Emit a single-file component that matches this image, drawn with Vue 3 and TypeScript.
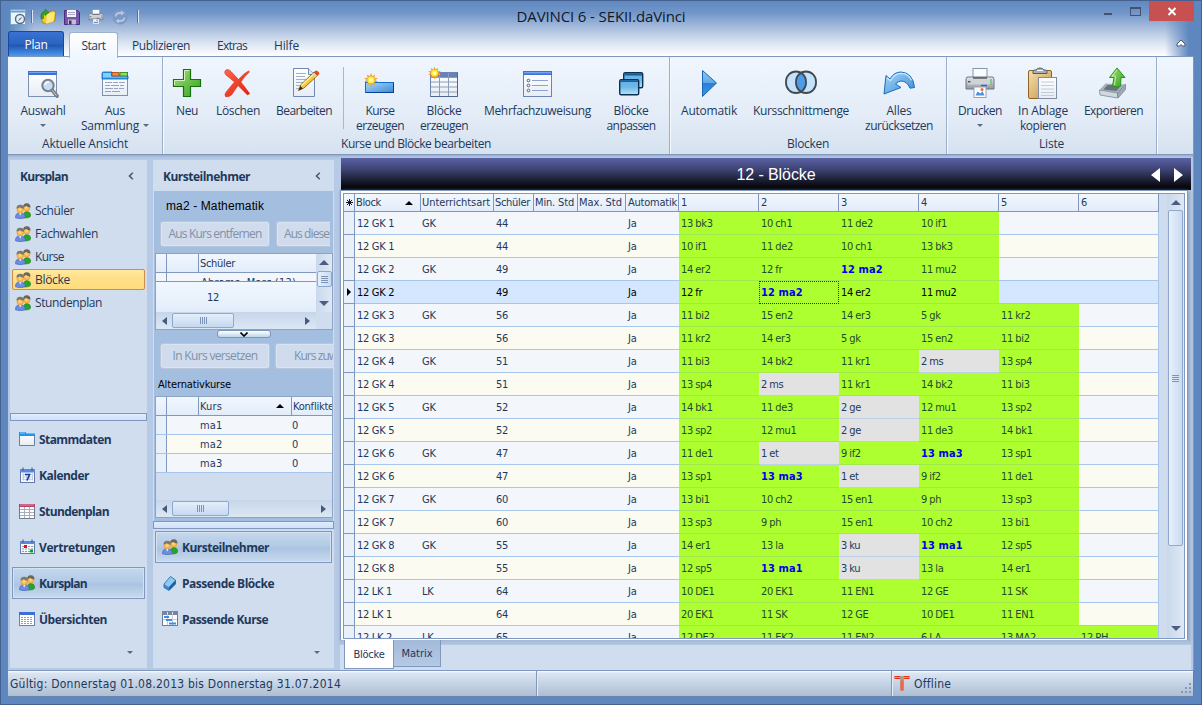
<script setup lang="ts">
import type { Directive } from 'vue'

/* Spreads or tightens a label so that it takes exactly the given width. */
const vFit: Directive<HTMLElement, number | undefined> = {
  mounted(el, binding) {
    const count = (el.textContent ?? '').length
    if (!binding.value || !count) return
    el.style.letterSpacing = '0px'
    const natural = el.getBoundingClientRect().width
    el.style.letterSpacing = `${(binding.value - natural) / count}px`
  },
}

interface Line { text: string; width: number }
interface Tool { icon: string; w: string; lines: Line[]; drop?: 'below' | 'inline' }
interface Group { title: Line; w: string; parts: Tool[][] }

const l = (text: string, width: number): Line => ({ text, width })

const tabs = [
  { ...l('Publizieren', 58), cls: 't-pub' },
  { ...l('Extras', 30), cls: 't-ext' },
  { ...l('Hilfe', 25), cls: 't-hil' },
]

const groups: Group[] = [
  {
    title: l('Aktuelle Ansicht', 86), w: 'g155',
    parts: [[
      { icon: 'select', w: 'w70', lines: [l('Auswahl', 45)], drop: 'below' },
      { icon: 'collection', w: 'w74', lines: [l('Aus', 20), l('Sammlung', 58)], drop: 'inline' },
    ]],
  },
  {
    title: l('Kurse und Blöcke bearbeiten', 150), w: 'g507',
    parts: [
      [
        { icon: 'plus', w: 'w48', lines: [l('Neu', 22)] },
        { icon: 'delete', w: 'w54', lines: [l('Löschen', 44)] },
        { icon: 'edit', w: 'w78', lines: [l('Bearbeiten', 56)] },
      ],
      [
        { icon: 'course', w: 'w72', lines: [l('Kurse', 29), l('erzeugen', 48)] },
        { icon: 'blocks', w: 'w56', lines: [l('Blöcke', 35), l('erzeugen', 48)] },
        { icon: 'multi', w: 'w131', lines: [l('Mehrfachzuweisung', 107)] },
        { icon: 'adapt', w: 'w56', lines: [l('Blöcke', 35), l('anpassen', 49)] },
      ],
    ],
  },
  {
    title: l('Blocken', 42), w: 'g277',
    parts: [[
      { icon: 'play', w: 'w78', lines: [l('Automatik', 56)] },
      { icon: 'venn', w: 'w106', lines: [l('Kursschnittmenge', 96)] },
      { icon: 'undo', w: 'w90', lines: [l('Alles', 25), l('zurücksetzen', 68)] },
    ]],
  },
  {
    title: l('Liste', 25), w: 'g210',
    parts: [[
      { icon: 'printer', w: 'w66', lines: [l('Drucken', 44)], drop: 'below' },
      { icon: 'clipboard', w: 'w60', lines: [l('In Ablage', 50), l('kopieren', 46)] },
      { icon: 'export', w: 'w81', lines: [l('Exportieren', 59)] },
    ]],
  },
]

const views = [l('Schüler', 39), l('Fachwahlen', 63), l('Kurse', 29), l('Blöcke', 35), l('Stundenplan', 67)]

const modules = [
  { ...l('Stammdaten', 72), icon: 'folder' },
  { ...l('Kalender', 50), icon: 'calendar' },
  { ...l('Stundenplan', 70), icon: 'timetable' },
  { ...l('Vertretungen', 76), icon: 'substitute' },
  { ...l('Kursplan', 48), icon: 'people' },
  { ...l('Übersichten', 68), icon: 'overview' },
]

const panels = [
  { ...l('Kursteilnehmer', 87), icon: 'people' },
  { ...l('Passende Blöcke', 92), icon: 'cube' },
  { ...l('Passende Kurse', 86), icon: 'gantt' },
]

const alternatives = ['ma1', 'ma2', 'ma3']

const columns = [
  l('Block', 25), l('Unterrichtsart', 68), l('Schüler', 35), l('Min. Std', 39), l('Max. Std', 43), l('Automatik', 49),
]

interface Row { block: string; kind: string; pupils: number; cells: string[] }
const row = (block: string, kind: string, pupils: number, cells: string): Row =>
  ({ block, kind, pupils, cells: cells.split(',') })

const rows: Row[] = [
  row('12 GK 1', 'GK', 44, '13 bk3,10 ch1,11 de2,10 if1'),
  row('12 GK 1', '', 44, '10 if1,11 de2,10 ch1,13 bk3'),
  row('12 GK 2', 'GK', 49, '14 er2,12 fr,12 ma2,11 mu2'),
  row('12 GK 2', '', 49, '12 fr,12 ma2,14 er2,11 mu2'),
  row('12 GK 3', 'GK', 56, '11 bi2,15 en2,14 er3,5 gk,11 kr2'),
  row('12 GK 3', '', 56, '11 kr2,14 er3,5 gk,15 en2,11 bi2'),
  row('12 GK 4', 'GK', 51, '11 bi3,14 bk2,11 kr1,2 ms,13 sp4'),
  row('12 GK 4', '', 51, '13 sp4,2 ms,11 kr1,14 bk2,11 bi3'),
  row('12 GK 5', 'GK', 52, '14 bk1,11 de3,2 ge,12 mu1,13 sp2'),
  row('12 GK 5', '', 52, '13 sp2,12 mu1,2 ge,11 de3,14 bk1'),
  row('12 GK 6', 'GK', 47, '11 de1,1 et,9 if2,13 ma3,13 sp1'),
  row('12 GK 6', '', 47, '13 sp1,13 ma3,1 et,9 if2,11 de1'),
  row('12 GK 7', 'GK', 60, '13 bi1,10 ch2,15 en1,9 ph,13 sp3'),
  row('12 GK 7', '', 60, '13 sp3,9 ph,15 en1,10 ch2,13 bi1'),
  row('12 GK 8', 'GK', 55, '14 er1,13 la,3 ku,13 ma1,12 sp5'),
  row('12 GK 8', '', 55, '12 sp5,13 ma1,3 ku,13 la,14 er1'),
  row('12 LK 1', 'LK', 64, '10 DE1,20 EK1,11 EN1,12 GE,11 SK'),
  row('12 LK 1', '', 64, '20 EK1,11 SK,12 GE,10 DE1,11 EN1'),
  row('12 LK 2', 'LK', 65, '12 DE2,11 EK2,11 EN2,6 LA,13 MA2,12 PH'),
]

const current = 3
const weak = ['2 ms', '2 ge', '1 et', '3 ku']

function cellClass(r: Row, ri: number, ci: number) {
  const text = r.cells[ci]
  return {
    filled: !!text && !weak.includes(text),
    weak: !!text && weak.includes(text),
    maths: !!text && / ma\d/.test(text),
    focus: ri === current && ci === 1,
  }
}
</script>

<template>
  <svg class="defs" width="0" height="0" aria-hidden="true">
    <defs>
      <linearGradient id="gBlue" x1="0" y1="0" x2="1" y2="1"><stop offset="0" stop-color="#a8d8f8" /><stop offset="1" stop-color="#3b8ad6" /></linearGradient>
      <linearGradient id="gPane" x1="0" y1="0" x2="0" y2="1"><stop offset="0" stop-color="#5cb0ea" /><stop offset=".5" stop-color="#6db9e8" /><stop offset="1" stop-color="#b8e6fa" /></linearGradient>
      <linearGradient id="gGreen" x1="0" y1="0" x2="1" y2="1"><stop offset="0" stop-color="#a4e07e" /><stop offset="1" stop-color="#36a01e" /></linearGradient>
      <linearGradient id="gPaper" x1="0" y1="0" x2="0" y2="1"><stop offset="0" stop-color="#fff" /><stop offset="1" stop-color="#e6edf6" /></linearGradient>
      <linearGradient id="gTan" x1="0" y1="0" x2="1" y2="1"><stop offset="0" stop-color="#f5dfb0" /><stop offset="1" stop-color="#c89340" /></linearGradient>
      <linearGradient id="gGray" x1="0" y1="0" x2="0" y2="1"><stop offset="0" stop-color="#e8ebee" /><stop offset="1" stop-color="#8f979f" /></linearGradient>
      <linearGradient id="gRed" x1="0" y1="0" x2="1" y2="1"><stop offset="0" stop-color="#f86a50" /><stop offset="1" stop-color="#e01c08" /></linearGradient>
      <linearGradient id="gPlay" x1="0" y1="0" x2="0" y2="1"><stop offset="0" stop-color="#8cc8f4" /><stop offset=".49" stop-color="#5ca8e8" /><stop offset=".5" stop-color="#2b80d4" /><stop offset="1" stop-color="#3f97e6" /></linearGradient>
      <radialGradient id="gSkin"><stop offset="0" stop-color="#ffe08a" /><stop offset="1" stop-color="#f0a030" /></radialGradient>
    </defs>

    <symbol id="star" viewBox="0 0 14 14">
      <path d="M7 0l1.200 3.300L11 1.600l-.6 3.200L14 5.200 11.200 7 14 8.800l-3.600.4.6 3.200-2.800-1.700L7 14l-1.200-3.300L3 12.400l.6-3.200L0 8.800 2.800 7 0 5.200l3.600-.4L3 1.600l2.800 1.700z" fill="#f0a030" />
      <circle cx="7" cy="7" r="3.600" fill="#ffee30" /><circle cx="7" cy="7" r="2" fill="#fffbc0" />
    </symbol>

    <symbol id="select" viewBox="0 0 32 32">
      <rect x="1.500" y="4.500" width="28" height="25" fill="url(#gPaper)" stroke="#7c90b0" />
      <rect x="1" y="4" width="29" height="4" fill="#3f6fd8" /><rect x="2" y="5" width="27" height="1" fill="#79a2f0" />
      <path d="M25 23l5 6" stroke="#777c84" stroke-width="3.600" stroke-linecap="round" /><path d="M25 23l4.500 5.500" stroke="#d5d8dc" stroke-width="1" />
      <circle cx="21" cy="18.500" r="5.700" fill="#c4dcf6" stroke="#7c8289" stroke-width="2" /><path d="M18 18a3.500 3.500 0 0 1 4-3" stroke="#fff" stroke-width="1.400" fill="none" />
    </symbol>

    <symbol id="collection" viewBox="0 0 32 32">
      <rect x="3.500" y="7.500" width="25" height="21" fill="url(#gPaper)" stroke="#7c90b0" />
      <path d="M3 6.500q0-1.500 1.500-1.500H13v4h16v3H3z" fill="#2c9cf0" stroke="#1560b0" stroke-width=".8" /><path d="M4 6h8v3.500h16v1H4z" fill="#7fd0ff" />
      <rect x="13" y="5.400" width="7" height="3.600" fill="#f48848" stroke="#a64010" stroke-width=".8" /><rect x="21" y="5.400" width="7.600" height="3.600" fill="#94dc50" stroke="#2c7c14" stroke-width=".8" />
      <path d="M6 15.500h7m1 0h5m1 0h6M6 18.500h5m1 0h8m1 0h4M6 21.500h8m1 0h4m1 0h5M6 24.500h6m1 0h8" stroke="#96a4c4" />
    </symbol>

    <symbol id="plus" viewBox="0 0 32 32">
      <path d="M12.500 2.500h7v10h10v7h-10v10h-7v-10h-10v-7h10z" fill="url(#gGreen)" stroke="#14720c" stroke-width="1.200" />
      <path d="M13.500 13.500v-10h5M3.500 18v-4.500h10" fill="none" stroke="#d2f4bc" stroke-width="1" />
    </symbol>

    <symbol id="delete" viewBox="0 0 32 32">
      <path d="M3 4q2.500-3 6 .5l7.500 8q5-6 10-8.500l1 .8q-5 4.500-8.600 10.200l8.800 11.500-2.200 1.500L16 18.500q-3.500 5-6.500 9.500Q7 30.500 3.500 29.500 2 27.500 4.500 24.500L12.500 15 4 8Q2 6 3 4z" fill="url(#gRed)" stroke="#e8280f" stroke-width=".6" />
    </symbol>

    <symbol id="edit" viewBox="0 0 32 32">
      <path d="M5.500 1.500h15l6 6v22h-21z" fill="url(#gPaper)" stroke="#7288b0" /><path d="M20.500 1.500v6h6" fill="#dce8f8" stroke="#7288b0" />
      <path d="M8 6.500h10M8 9.500h9M8 12.500h13M8 15.500h11M8 18.500h9M8 21.500h4" stroke="#9eb0d0" />
      <path d="M10.500 23.500l2.500-6L26 5l3.500 3.500L16 21z" fill="#f6c838" stroke="#96640c" stroke-width=".9" /><path d="M13.500 18.500L26.500 6.500" stroke="#fff0a0" stroke-width="1.200" />
      <path d="M10.500 23.500l1.800-4.500 2.600 2.600z" fill="#33281c" /><path d="M26 5l1.800-1.500q3.500.5 3.500 3.500l-1.800 1.500z" fill="#e84818" /><path d="M24.500 6.500l3.500 3.500" stroke="#c8d4e0" stroke-width="1.400" />
    </symbol>

    <symbol id="course" viewBox="0 0 32 32">
      <rect x="1.500" y="15.500" width="28" height="10" fill="url(#gBlue)" stroke="#0f6cd0" stroke-width="1" />
      <path d="M29.500 16v9.500H2" fill="none" stroke="#0a3c98" /><use href="#star" x="0" y="6" width="14" height="14" />
    </symbol>

    <symbol id="blocks" viewBox="0 0 32 32">
      <rect x="2.500" y="5.500" width="27" height="24" fill="url(#gPaper)" stroke="#6e84b0" /><rect x="3" y="6" width="26" height="4" fill="#6482c0" />
      <path d="M3 10.500h26M3 15h26M3 20h26M3 25h26M11.500 6v23M20.500 6v23" stroke="#8c9cb8" /><path d="M2.500 29.500h27v-24" fill="none" stroke="#4f6490" />
      <use href="#star" x="0" y="-1" width="13" height="14" />
    </symbol>

    <symbol id="multi" viewBox="0 0 32 32">
      <rect x="1.500" y="4.500" width="28" height="25" fill="url(#gPaper)" stroke="#6e84b0" /><rect x="1" y="4" width="29" height="4" fill="#3f6fd8" /><rect x="2" y="5" width="27" height="1.400" fill="#79a2f0" />
      <g fill="#fff" stroke="#4a5a74"><circle cx="6.500" cy="13.500" r="1.300" /><circle cx="6.500" cy="18.500" r="1.300" /><circle cx="6.500" cy="23.500" r="1.300" /></g>
      <path d="M10 13.500h16M10 18.500h16M10 23.500h16" stroke="#8ca4cc" />
    </symbol>

    <symbol id="adapt" viewBox="0 0 32 32">
      <rect x="8.700" y="5.700" width="19" height="15" rx="1.500" fill="url(#gPane)" stroke="#0c3050" stroke-width="1.400" /><path d="M9.500 7.500h17.500" stroke="#1c5c90" stroke-width="2" />
      <rect x="4.700" y="12.700" width="19" height="15" rx="1.500" fill="url(#gPane)" stroke="#0c3050" stroke-width="1.400" /><path d="M5.500 14.200h17.500" stroke="#1c6298" stroke-width="1.600" />
    </symbol>

    <symbol id="play" viewBox="0 0 32 32"><path d="M9.500 3.500L23.500 16l-14 13.500z" fill="url(#gPlay)" stroke="#1c64b4" stroke-width="1" /></symbol>

    <symbol id="venn" viewBox="0 0 32 32">
      <rect x="1" y="4.500" width="20" height="21.500" rx="10" fill="#c4e2fa" /><rect x="11" y="4.500" width="20" height="21.500" rx="10" fill="#c4e2fa" />
      <path d="M16 6.200q5 3 5 9t-5 9q-5-3-5-9t5-9z" fill="#4c9ce8" />
      <rect x="1" y="4.500" width="20" height="21.500" rx="10" fill="none" stroke="#404850" stroke-width="1.800" /><rect x="11" y="4.500" width="20" height="21.500" rx="10" fill="none" stroke="#404850" stroke-width="1.800" />
    </symbol>

    <symbol id="undo" viewBox="0 0 32 32">
      <path d="M1 27L3 8.500l4 3.500Q11 5 18 5q12 .8 13.500 15.500l-4.500.7q-3-7.200-9-7.200-3 .3-5.500 3l5.500 3.500z" fill="url(#gBlue)" stroke="#1a6cc0" stroke-width="1" />
      <path d="M4 11l3.300 2.700Q11.500 6.500 18 6.300q7.500.4 10.500 7" fill="none" stroke="#c8eaff" stroke-width="1.200" />
    </symbol>

    <symbol id="printer" viewBox="0 0 32 32">
      <rect x="9" y="1.500" width="14" height="10" fill="#f8fbff" stroke="#8894a8" />
      <path d="M3 10h26l1 2v10H2V12z" fill="url(#gGray)" stroke="#70767e" /><path d="M4 12.500h24v5H4z" fill="#cfd3d8" /><path d="M9 11h14" stroke="#4a5058" stroke-width="1.400" />
      <rect x="4" y="14" width="2.500" height="1.500" fill="#555" /><path d="M27 12.500v1m0 1v1m0 1v1" stroke="#20b020" stroke-width="1.600" /><path d="M17 18.500h6" stroke="#3060d0" stroke-width="1.500" />
      <rect x="10" y="20" width="12" height="10.500" fill="#fff" stroke="#90a4c0" /><path d="M11.500 28.500l2-4 3 2 2-2.500 2 4.500z" fill="#4a90e0" /><circle cx="18" cy="22.500" r="1.600" fill="#f07040" />
    </symbol>

    <symbol id="clipboard" viewBox="0 0 32 32">
      <rect x="1.500" y="3.500" width="23" height="28" rx="1.500" fill="url(#gTan)" stroke="#8c6426" />
      <path d="M6 6.500V4.500q0-1.500 1.500-1.500H9q1.500-2 4-2t4 2h1.500q1.500 0 1.500 1.500v2z" fill="#a8aeb6" stroke="#555c66" /><path d="M10 3.500h6" stroke="#fff" />
      <rect x="11.500" y="10.500" width="18" height="21" fill="url(#gPaper)" stroke="#7e8ca4" /><path d="M14 15h13M14 18.500h13M14 22h13M14 25.500h13M14 28.500h13" stroke="#c4ccd8" />
    </symbol>

    <symbol id="export" viewBox="0 0 32 32">
      <path d="M1.500 23l6-6.500 19.500 1-6.500 8.500z" fill="#a4b0bc" /><path d="M5.500 22.500l4-4.500h14l-5 6z" fill="#66727e" />
      <path d="M1.500 23l18 3v5L2 28z" fill="#d0d8e0" stroke="#7c8894" stroke-width=".8" /><path d="M19.500 26l8-9v5.500l-7.500 8.500z" fill="#9ca8b4" stroke="#7c8894" stroke-width=".8" />
      <path d="M19 1l8 9.500h-4L22.500 19q-4 2-8 0l1.500-8.500h-4.500z" fill="url(#gGreen)" stroke="#259814" /><path d="M19 3l-5 6h3.500l-1 9" fill="none" stroke="#c4f6a0" />
    </symbol>

    <symbol id="people" viewBox="0 0 16 16">
      <path d="M8.500 15q-1-5 2.500-6.500 4.500 0 4.800 4-.5 2.800-7.300 2.500z" fill="#28a428" stroke="#157018" stroke-width=".5" />
      <circle cx="11.700" cy="4.800" r="3.500" fill="url(#gSkin)" /><path d="M8.200 4.200Q8 .4 11.800.3q3.900.2 3.700 4.300Q12.500 4.500 11 2.800 10 4.200 8.200 4.200z" fill="#6a6660" />
      <path d="M.3 14.800Q.3 10 4.800 9.500q5.200.3 5.700 5-4.800 2.600-10.200.3z" fill="#6c8ce0" stroke="#3c5cb4" stroke-width=".5" /><path d="M4 9.700l1.200 3 1.400-3z" fill="#dceaff" />
      <circle cx="5.200" cy="6.500" r="3.600" fill="url(#gSkin)" /><path d="M1.500 5.600Q1.200 2 5.200 1.800 9.300 2 9 5.800 6 5.400 4.600 4.200 3.500 5.600 1.500 5.600z" fill="#7c7872" />
    </symbol>

    <symbol id="folder" viewBox="0 0 16 16">
      <path d="M.5 2.500h6l1 1h8v11H.5z" fill="url(#gPaper)" stroke="#68809c" /><path d="M0 1h6.500l1 1.500H16v2.500H0z" fill="#1c94f0" /><path d="M1 2h5" stroke="#8cd0ff" />
    </symbol>

    <symbol id="calendar" viewBox="0 0 16 16">
      <rect x="1.500" y="2.500" width="14" height="13" fill="#f6f9ff" stroke="#6078b0" /><rect x="1" y="2" width="15" height="3.500" fill="#5c88e0" /><path d="M4 .5v3m9-3v3" stroke="#444c60" />
      <path d="M3 7.500h11M3 10h11M3 12.500h11M4.500 6.500v7m3-7v7m3-7v7m3-7v7" stroke="#b8c4dc" stroke-width=".8" /><path d="M6 7.500h4.500L8 13.500" fill="none" stroke="#1c3c8c" stroke-width="1.600" />
    </symbol>

    <symbol id="timetable" viewBox="0 0 16 16">
      <rect x=".5" y="1.500" width="15" height="14" fill="#fff" stroke="#707c90" /><rect x="0" y="1" width="16" height="3" fill="#b84068" /><path d="M1 2h14" stroke="#e090a8" />
      <path d="M1 6.500h14M1 9.500h14M1 12.500h14M5.500 4v11m5-11v11" stroke="#a4aec0" />
    </symbol>

    <symbol id="substitute" viewBox="0 0 16 16">
      <rect x="1.500" y="2.500" width="14" height="12" fill="#f6f9ff" stroke="#6078b0" /><rect x="1" y="2" width="15" height="3" fill="#5c88e0" /><path d="M4 .5v3m9-3v3" stroke="#444c60" />
      <path d="M3 7.500h11m-11 2.500h11m-11 2.500h11" stroke="#8c98ac" stroke-dasharray="2 1" stroke-width="1.200" /><rect x="5" y="6" width="3" height="3" fill="#e01010" /><rect x="11" y="10.500" width="3" height="3" fill="#10a020" />
    </symbol>

    <symbol id="overview" viewBox="0 0 16 16">
      <rect x=".5" y="1.500" width="15" height="13" fill="#fff" stroke="#6e80a4" /><rect x="0" y="1" width="16" height="3" fill="#3a70d8" />
      <path d="M2 6.500h12M2 8.500h12M2 10.500h12M2 12.500h12" stroke="#8ca0c8" stroke-dasharray="2 1" />
    </symbol>

    <symbol id="cube" viewBox="0 0 16 16">
      <path d="M2 9l6.500-7.500L13.500 5 7 12z" fill="#8ccaf6" /><path d="M2 9l5 3v3.500l-5-3z" fill="#3c8cd4" /><path d="M7 12l6.500-7v4L7 15.500z" fill="#1c5c98" />
      <path d="M2 9l6.500-7.500L13.500 5v4L7 15.500l-5-3z" fill="none" stroke="#1c64a4" stroke-width=".8" />
    </symbol>

    <symbol id="gantt" viewBox="0 0 16 16">
      <rect x=".5" y=".5" width="15" height="14" fill="#fff" stroke="#707c90" /><rect x="0" y="0" width="16" height="4" fill="#7884a4" /><path d="M5.500 1v13m5-13v13M1 8.500h14" stroke="#c4ccd8" />
      <path d="M2 6h5M4 9h6M7 12.500h7" stroke="#3c8ce8" stroke-width="2" /><path d="M5.500 1v2m5-2v2" stroke="#dce4f4" />
    </symbol>

    <symbol id="brand" viewBox="0 0 16 16">
      <rect x=".5" y=".5" width="15" height="15" rx="1" fill="#eaf4fc" stroke="#76a4cc" /><path d="M1 2.500h14" stroke="#62a0d8" stroke-width="2" />
      <circle cx="10" cy="10" r="4.500" fill="#e8eef4" stroke="#5a6a7c" stroke-width="1.400" /><path d="M10.500 10.500l2-3-3 2-2 3z" fill="#5484b8" />
    </symbol>
    <symbol id="open" viewBox="0 0 16 16">
      <path d="M2 4l5-2 1 1.500 5-2 2 1v9L6 15l-4-2z" fill="#f4cc30" stroke="#a47c0c" stroke-width=".8" /><path d="M7 5l8-2-1.500 9.500L6 15z" fill="#ffe878" /><path d="M1 9.500Q0 3 5 2.200V0l4 3.500-4 3V4.800Q3 5.500 3.500 9.500z" fill="#28a428" stroke="#187018" stroke-width=".5" />
    </symbol>
    <symbol id="save" viewBox="0 0 16 16">
      <path d="M.5 1.500h13l2 2v12H.5z" fill="#7458a8" stroke="#482c80" /><rect x="3" y="1" width="9" height="7" fill="#f4f4fa" /><path d="M4 3.500h7m-7 2h7" stroke="#a4a4c0" /><rect x="4" y="10.500" width="8" height="5" fill="#c4bcd8" /><rect x="5" y="11.500" width="2.500" height="4" fill="#403060" />
    </symbol>
    <symbol id="refresh" viewBox="0 0 16 16">
      <circle cx="8" cy="8" r="7.500" fill="#7c98c4" /><path d="M3.500 7.500Q4 4 8 4h1.500M12.500 8.500Q12 12 8 12H6.500" stroke="#b4c8e4" stroke-width="1.800" fill="none" /><path d="M9 1.500L12.500 4 9 6.500zM7 9.500L3.500 12 7 14.500z" fill="#b4c8e4" />
    </symbol>
  </svg>

  <div class="window">
    <header class="caption">
      <div class="quick">
        <svg class="i16"><use href="#brand" /></svg><i class="qsep q1" />
        <svg class="i16"><use href="#open" /></svg><svg class="i16"><use href="#save" /></svg>
        <svg class="i16"><use href="#printer" /></svg><svg class="i16"><use href="#refresh" /></svg><i class="qsep q2" />
      </div>
      <div class="title"><span v-fit="169">DAVINCI 6 - SEKII.daVinci</span></div>
      <div class="sysbuttons">
        <span class="minimize" /><span class="maximize" />
        <button class="close" aria-label="Schließen"><svg width="10" height="9" viewBox="0 0 10 9"><path d="M1.500 1l7 7m0-7l-7 7" stroke="#fff" stroke-width="2" /></svg></button>
      </div>
      <nav class="tabs">
        <div class="tab plan"><span v-fit="23">Plan</span></div>
        <div class="tab start"><span v-fit="24">Start</span></div>
        <div v-for="t in tabs" :key="t.text" class="tab" :class="t.cls"><span v-fit="t.width">{{ t.text }}</span></div>
        <svg class="collapse" width="10" height="8" viewBox="0 0 10 8"><path d="M1 5l4-4 4 4v2H6.500L5 5.500 3.500 7H1z" fill="#fff" stroke="#4c5666" /></svg>
      </nav>
    </header>

    <section class="ribbon">
      <div v-for="g in groups" :key="g.title.text" class="group" :class="g.w">
        <div class="parts">
          <div v-for="(p, pi) in g.parts" :key="pi" class="part">
            <div v-for="(t, ti) in p" :key="ti" class="tool" :class="t.w">
              <svg class="i32"><use :href="'#' + t.icon" /></svg>
              <div v-for="(s, si) in t.lines" :key="si" class="line">
                <span v-fit="s.width">{{ s.text }}</span>
                <i v-if="t.drop === 'inline' && si === 1" class="drop inline" />
              </div>
              <div v-if="t.drop === 'below'" class="line"><i class="drop" /></div>
            </div>
          </div>
        </div>
        <div class="gtitle"><span v-fit="g.title.width">{{ g.title.text }}</span></div>
      </div>
    </section>

    <main class="body">
      <aside class="pane first">
        <div class="phead"><b v-fit="48">Kursplan</b><svg class="chev" viewBox="0 0 6 8"><path d="M4.800.8L1.500 4l3.300 3.200" /></svg></div>
        <ul class="views">
          <li v-for="(v, i) in views" :key="v.text" :class="{ on: i === 3 }">
            <svg class="i16"><use href="#people" /></svg><span v-fit="v.width">{{ v.text }}</span>
          </li>
        </ul>
        <div class="split" />
        <ul class="nav">
          <li v-for="m in modules" :key="m.text" :class="{ on: m.text === 'Kursplan' }">
            <svg class="i16"><use :href="'#' + m.icon" /></svg><b v-fit="m.width">{{ m.text }}</b>
          </li>
        </ul>
        <div class="more"><i class="drop" /></div>
      </aside>

      <aside class="pane second">
        <div class="phead"><b v-fit="87">Kursteilnehmer</b><svg class="chev" viewBox="0 0 6 8"><path d="M4.800.8L1.500 4l3.300 3.200" /></svg></div>
        <div class="content">
          <div class="subject"><span v-fit="98">ma2 - Mathematik</span></div>
          <div class="buttons top">
            <div class="btn"><span v-fit="93">Aus Kurs entfernen</span></div>
            <div class="btn wide"><span v-fit="83">Aus diesem Block</span></div>
          </div>
          <div class="list one">
            <div class="lmain">
              <div class="lhead"><i class="ind" /><i class="gap" /><span v-fit="36" class="lh">Schüler</span></div>
              <div class="peek"><i class="ind" /><i class="gap" /><span>Abrams, Marc (12)</span></div>
              <div class="sum"><span>12</span></div>
              <div class="hs"><i class="al" /><i class="thumb"><i /></i><i class="ar" /></div>
            </div>
            <div class="vs small"><i class="up" /><i class="thumb"><i /></i><i class="down" /><i class="corner" /></div>
          </div>
          <div class="handle"><i><svg width="8" height="5" viewBox="0 0 8 5"><path d="M.5.5L4 4 7.500.5" fill="none" stroke="#000" stroke-width="1.600" /></svg></i></div>
          <div class="buttons low">
            <div class="btn"><span v-fit="85">In Kurs versetzen</span></div>
            <div class="btn wide2"><span v-fit="68">Kurs zuweisen</span></div>
          </div>
          <div class="alt"><span v-fit="73">Alternativkurse</span></div>
          <div class="list two">
            <div class="lmain">
              <div class="lhead"><i class="ind" /><i class="gap" /><span class="lh kurs"><span v-fit="22">Kurs</span><i class="sort" /></span><span class="lh konf"><span v-fit="41">Konflikte</span></span></div>
              <div v-for="a in alternatives" :key="a" class="lrow"><i class="ind" /><span class="name">{{ a }}</span><span>0</span></div>
              <div class="space" />
              <div class="hs"><i class="al" /><i class="thumb"><i /></i><i class="ar" /></div>
            </div>
          </div>
        </div>
        <div class="split" />
        <ul class="nav">
          <li v-for="(m, i) in panels" :key="m.text" :class="{ on: i === 0 }">
            <svg class="i16"><use :href="'#' + m.icon" /></svg><b v-fit="m.width">{{ m.text }}</b>
          </li>
        </ul>
        <div class="more"><i class="drop" /></div>
      </aside>

      <section class="work">
        <div class="banner">
          <span class="bt"><span v-fit="79">12 - Blöcke</span></span>
          <svg class="arrows" width="34" height="16" viewBox="0 0 34 16"><path d="M10 1v14L1 8zM24 1v14l9-7z" fill="#fff" /></svg>
        </div>
        <div class="frame">
          <div class="inner">
            <div class="grid">
              <div class="row head">
                <span class="ind"><svg width="7" height="7" viewBox="0 0 7 7"><path d="M3.500 0v7M0 3.500h7M1 1l5 5m0-5L1 6" stroke="#000" stroke-width=".9" /></svg></span>
                <span v-for="(c, ci) in columns" :key="c.text" class="c" :class="'k' + ci"><span v-fit="c.width">{{ c.text }}</span><i v-if="ci === 0" class="sort" /></span>
                <span v-for="n in 6" :key="n" class="c slot">{{ n }}</span>
              </div>
              <div v-for="(r, ri) in rows" :key="ri" class="row" :class="{ odd: ri % 2 === 1, current: ri === current }">
                <span class="ind"><i v-if="ri === current" class="ptr" /></span>
                <span class="c k0">{{ r.block }}</span><span class="c k1">{{ r.kind }}</span><span class="c k2">{{ r.pupils }}</span>
                <span class="c k3" /><span class="c k4" /><span class="c k5">Ja</span>
                <span v-for="ci in 6" :key="ci" class="c slot" :class="cellClass(r, ri, ci - 1)">{{ r.cells[ci - 1] }}</span>
              </div>
            </div>
            <div class="vs big"><i class="up" /><i class="thumb"><i /></i><i class="down" /></div>
          </div>
        </div>
        <div class="sheets">
          <div class="sheet on"><span v-fit="31">Blöcke</span></div>
          <div class="sheet"><span v-fit="31">Matrix</span></div>
        </div>
      </section>
    </main>

    <footer class="status">
      <div class="s1"><span v-fit="331">Gültig: Donnerstag 01.08.2013 bis Donnerstag 31.07.2014</span></div>
      <div class="s2" />
      <div class="s3">
        <svg width="16" height="15" viewBox="0 0 16 15"><path d="M.5 1.500h15M8 3v11.500" stroke="#e8300c" stroke-width="3" /><path d="M1 1.500h14M8 4v10" stroke="#ff9c70" /><rect x="6" y="0" width="4" height="4.500" fill="#a4a098" /></svg>
        <span v-fit="37">Offline</span>
        <svg class="grip" width="12" height="12" viewBox="0 0 12 12"><path d="M9 1h2M5 5h2m2 0h2M1 9h2m2 0h2m2 0h2" stroke="#8498b8" stroke-width="2" /></svg>
      </div>
    </footer>
  </div>
</template>

<style>
html, body { margin: 0; background: #5e87bf; overflow: hidden; }
</style>

<style scoped>
* { box-sizing: border-box; }
ul { list-style: none; margin: 0; padding: 0; }
.defs { position: absolute; }
.window {
  width: 1202px; height: 705px; padding: 0 7px 7px; border: 1px solid #44618f; background: #5e87bf; color: #1e395b;
  font: 12px/15px "Open Sans", "Noto Sans", sans-serif; white-space: nowrap; display: flex; flex-direction: column; overflow: hidden;
}
span, b { display: inline-block; }
i { display: block; flex: none; }
svg { display: block; flex: none; }
.i16 { width: 16px; height: 16px; }
.i32 { width: 32px; height: 32px; }

/* caption */
.caption {
  height: 55px; margin: 0 -7px; padding: 0 7px; display: grid; grid-template: 31px 24px / 400px 1fr 400px; flex: none;
  background: linear-gradient(90deg, #5e87bf 7px, #5e87bf00 34px, #5e87bf00 1164px, #5e87bf 1188px), linear-gradient(#6089c1 0, #7296c9 12px, #a4bbdc 26px, #d8e2f0 41px, #fff 55px);
}
.quick { display: flex; align-items: center; padding: 0 0 0 2px; }
.quick .i16:nth-of-type(n+2) { margin-right: 8px; }
.qsep { width: 2px; height: 13px; background: #5a6f92; border-right: 1px solid #dce6f4; }
.q1 { margin: 0 7px 0 5px; }
.q2 { margin-left: 1px; }
.title { text-align: center; font-size: 15px; line-height: 30px; color: #101828; }
.sysbuttons { display: flex; justify-content: flex-end; align-items: flex-start; }
.minimize { width: 8px; height: 2px; background: #41536f; margin: 12px 18px 0 0; }
.maximize { width: 11px; height: 9px; border: 1px solid #41536f; border-top-width: 2px; margin: 6px 8px 0 0; }
.close { width: 45px; height: 20px; background: #c75050; border: 0; padding: 0; display: flex; align-items: center; justify-content: center; }
.tabs { grid-column: 1 / -1; display: flex; position: relative; line-height: 26px; align-items: stretch; }
.tab { padding-top: 1px; }
.plan {
  width: 56px; text-align: center; color: #fff; margin-top: -1px; padding-top: 0; border: 1px solid #1c479c; border-bottom: 0; border-radius: 3px 3px 0 0; line-height: 25px;
  background: linear-gradient(#3a72d4 0, #2a63c0 50%, #2055b0 55%, #4c9af0 100%);
}
.start { width: 49px; margin: 0 0 -2px 5px; height: 26px; border: 1px solid #9cb2d0; border-bottom: 0; border-radius: 3px 3px 0 0; background: linear-gradient(#fff, #eff6fe); text-align: center; padding: 0; position: relative; z-index: 1; }
.t-pub { margin-left: 14px; width: 85px; }
.t-ext { width: 57px; }
.collapse { margin: 7px 8px 0 auto; }

/* ribbon */
.ribbon { height: 99px; flex: none; display: flex; border: solid #8098bc; border-width: 1px 1px 1px 0; background: linear-gradient(#f0f6fe, #e3ecf7 60%, #d6e2f0); }
.group { position: relative; display: flex; flex-direction: column; border-right: 1px solid #9cafca; height: 97px; box-shadow: 1px 0 #f6faff; }
.g155 { width: 155px; } .g507 { width: 507px; } .g277 { width: 277px; } .g210 { width: 210px; }
.parts { height: 79px; padding-top: 10px; display: flex; }
.part { display: flex; }
.part + .part::before { content: ""; width: 1px; height: 62px; background: #a8b8ce; }
.tool { display: flex; flex-direction: column; align-items: center; }
.tool .i32 { margin-bottom: 4px; }
.w48 { width: 48px; } .w54 { width: 54px; } .w56 { width: 56px; } .w60 { width: 60px; } .w66 { width: 66px; } .w70 { width: 70px; } .w72 { width: 72px; }
.w74 { width: 74px; } .w78 { width: 78px; } .w81 { width: 81px; } .w90 { width: 90px; } .w106 { width: 106px; } .w131 { width: 131px; }
.line { height: 15px; display: flex; align-items: center; justify-content: center; }
.drop { border: solid transparent; border-width: 3px 3px 0; border-top-color: #5a6b86; }
.drop.inline { margin-left: 4px; }
.gtitle { text-align: center; height: 15px; }

/* body */
.body { height: 515px; flex: none; display: flex; background: #b7cae5; padding: 5px 0 0 2px; border-right: 1px solid #7c98c4; box-shadow: inset 0 3px 3px -2px #8ea6c6; }
.pane { background: #d0ddee; height: 508px; display: flex; flex-direction: column; flex: none; }
.first { width: 137px; margin-right: 6px; }
.second { width: 181px; margin-right: 7px; }
.phead { height: 31px; padding: 1px 13px 0 10px; display: flex; align-items: center; justify-content: space-between; flex: none; }
.chev { width: 6px; height: 8px; }
.chev path { fill: none; stroke: #4c5a78; stroke-width: 1.600; }
.views { flex: 1; padding: 9px 2px 0; }
.views li { height: 21px; margin-bottom: 2px; padding-left: 3px; display: flex; align-items: center; gap: 4px; }
.views .on { border: 1px solid #c8904a; border-radius: 2px; padding-left: 2px; background: linear-gradient(#ffe8a0, #ffe08a 40%, #ffdc7c); }
.split { height: 8px; flex: none; border: 1px solid #8098bf; background: linear-gradient(#e0edff, #cfe0f8); }
.nav { padding: 2px 2px 0; flex: none; }
.nav li { height: 32px; margin-bottom: 4px; padding-left: 7px; display: flex; align-items: center; gap: 4px; }
.nav .on { border: 1px solid #8098bf; padding-left: 6px; background: linear-gradient(#c4d8ed 0, #b4cbe6 45%, #abc4e1 55%, #c8dbee 100%); box-shadow: inset 0 0 0 1px #d4e2f2; }
.more { height: 29px; flex: none; display: flex; justify-content: flex-end; padding: 12px 14px 0; }

/* participants */
.content { width: 179px; margin: 0 1px; height: 330px; flex: none; background: #a4bee0; overflow: hidden; }
.subject { height: 30px; padding-left: 12px; line-height: 30px; color: #000; font-family: "Liberation Sans", sans-serif; font-size: 12px; }
.buttons { height: 26px; margin-left: 6px; display: flex; gap: 6px; overflow: hidden; }
.top { margin-right: 3px; }
.btn { width: 110px; height: 26px; flex: none; border: 1px solid #b9c7da; border-radius: 3px; background: #d0dced; color: #8090a8; text-align: center; line-height: 24px; box-shadow: inset 0 0 0 1px #d9e4f2; }
.wide { text-align: left; padding-left: 7px; }
.wide2 { margin-left: -1px; text-align: left; padding-left: 18px; }
.list, .grid, .sheets, .alt { font: 11px/15px "DejaVu Sans Condensed", "DejaVu Sans", sans-serif; letter-spacing: -.2px; }
.list { border: 1px solid #8ca2c6; display: flex; overflow: hidden; background: #d0ddee; margin-left: 1px; }
.one { height: 77px; margin-top: 6px; width: 178px; }
.lmain { flex: 1; min-width: 0; display: flex; flex-direction: column; overflow: hidden; }
.lhead { height: 19px; display: flex; border-bottom: 1px solid #8098bf; background: linear-gradient(#f2f7fe, #e2ecf9); flex: none; line-height: 19px; }
.ind { width: 11px; flex: none; border-right: 1px solid #8098bf; }
.gap { width: 32px; border-right: 1px solid #8098bf; }
.lh { padding-left: 1px; flex: none; }
.peek { height: 9px; display: flex; background: #f3f6fb; overflow: hidden; border-bottom: 1px solid #8098bf; line-height: 18px; }
.peek .gap { border: 0; }
.peek span { padding-left: 2px; margin-top: 1px; letter-spacing: .2px; }
.sum { height: 30px; background: linear-gradient(#f2f7ff, #e3edfa); line-height: 31px; padding-left: 51px; }
.hs { height: 17px; display: flex; align-items: center; background: linear-gradient(#c6d6ea, #dce7f4); padding: 0 6px 0 6px; }
.al, .ar { border: solid transparent; border-width: 4px 0; }
.al { border-right: 5px solid #46587c; }
.ar { border-left: 5px solid #46587c; margin-left: auto; }
.hs .thumb { width: 62px; height: 15px; margin-left: 5px; border: 1px solid #8ea9cf; border-radius: 2px; background: linear-gradient(#e4eefb, #c6d9f0); display: flex; align-items: center; justify-content: center; }
.hs .thumb i { width: 7px; height: 7px; background: repeating-linear-gradient(90deg, #7c94b8 0 1px, transparent 1px 2px); }
.two .hs .thumb { width: 57px; }
.vs { display: flex; flex-direction: column; align-items: center; background: linear-gradient(90deg, #c9d8eb, #dfe9f5); }
.small { width: 16px; }
.up { border: solid transparent; border-width: 0 5px 5px; border-bottom-color: #4c5d84; }
.down { border: solid transparent; border-width: 5px 5px 0; border-top-color: #4c5d84; }
.small .up { margin-top: 6px; }
.vs .thumb { border: 1px solid #8ea9cf; border-radius: 2px; background: linear-gradient(90deg, #e8f1fb, #c9dbf1); display: flex; align-items: center; justify-content: center; }
.small .thumb { width: 15px; height: 16px; margin-top: 6px; }
.vs .thumb i { width: 7px; height: 7px; background: repeating-linear-gradient(#7c94b8 0 1px, transparent 1px 2px); }
.small .down { margin-top: 14px; }
.small .corner { margin-top: auto; width: 16px; height: 17px; background: #d0ddee; }
.handle { height: 8px; display: flex; justify-content: center; }
.handle i { width: 54px; height: 8px; border: 1px solid #7c96b8; border-radius: 3px; background: linear-gradient(#fff, #bcd6ec); display: flex; justify-content: center; align-items: center; }
.low { margin-top: 5px; }
.alt { height: 26px; line-height: 32px; padding-left: 4px; color: #000; }
.two { height: 122px; width: 178px; margin-top: 1px; }
.kurs { width: 93px; display: flex; justify-content: space-between; align-items: center; border-right: 1px solid #8098bf; padding-right: 7px; }
.sort { border: solid transparent; border-width: 0 4px 4px; border-bottom-color: #000; }
.lrow { height: 19px; flex: none; display: flex; border-bottom: 1px solid #a6c6ec; background: #f3f6fb; line-height: 19px; }
.lrow .ind { background: #e8f0fa; }
.lrow:nth-child(odd) { background: #fcfbf2; }
.name { width: 92px; margin-left: 33px; }
.lrow span { letter-spacing: .2px; }
.space { flex: 1; }

/* work area */
.work { width: 851px; margin: -2px 0 0 -1px; display: flex; flex-direction: column; }
.banner { height: 32px; margin-left: 1px; flex: none; background: linear-gradient(#5a62a6, #3a3f6c 40%, #000 96%); display: flex; align-items: center; justify-content: center; position: relative; color: #fff; font: 16px/33px "Liberation Sans", sans-serif; }
.bt { margin-left: 20px; }
.arrows { position: absolute; right: 7px; top: 9px; }
.frame { width: 848px; height: 451px; border: 1px solid #8098bf; background: #fff; padding: 2px 2px 1px 2px; flex: none; box-shadow: 1px 1px 4px #8298b8; position: relative; }
.inner { height: 446px; border: 1px solid #8098bf; display: flex; background: #d0ddee; overflow: hidden; }
.grid { width: 815px; flex: none; }
.row { display: flex; height: 23px; line-height: 23px; background: #f3f6fb; }
.row.odd { background: #fcfbf2; }
.row.current { background: #d5e7ff; color: #000; }
.row > .ind { border-bottom: 1px solid #8098bf; background: #e8f0fa; display: flex; align-items: center; justify-content: center; }
.ptr { border: solid transparent; border-width: 4px 0 4px 4px; border-left-color: #000; }
.c { flex: none; border-bottom: 1px solid #a6c6ec; padding-left: 2px; height: 100%; letter-spacing: -.25px; word-spacing: -.8px; overflow: hidden; }
.k0 { width: 66px; word-spacing: -.2px; } .k1 { width: 73px; padding-left: 1px; } .k2 { width: 40px; } .k3 { width: 44px; } .k4 { width: 48px; } .k5 { width: 53px; }
.slot { width: 80px; }
.slot:last-child { border-right: 1px solid #a6c6ec; }
.head { height: 18px; line-height: 18px; background: linear-gradient(#f2f7fe, #e2ecf9); border-bottom: 1px solid #8098bf; }
.head .c { border: 0; border-right: 1px solid #8098bf; padding-left: 1px; word-spacing: 0; }
.head > .ind { border-bottom: 0; background: none; }
.head .slot, .head .k5 { padding-left: 2px; }
.head .k0 { display: flex; justify-content: space-between; align-items: center; padding-right: 7px; }
.filled { background: #adff2f; border-bottom-color: #a4e850; color: #1e4a30; }
.weak { background: #e2e2e2; border-bottom-color: #bcd0e8; }
.current .filled { color: #000; }
.row .maths { color: #0000e8; font-weight: bold; letter-spacing: .1px; word-spacing: 0; }
.focus { border: 1px dotted #3c10c0; padding-left: 1px; line-height: 21px; }
.big { width: 17px; margin-left: auto; }
.big .up { margin-top: 6px; }
.big .thumb { width: 15px; height: 336px; margin-top: 5px; }
.big .down { margin-top: 80px; }
.sheets { height: 30px; display: flex; margin-top: -1px; padding-left: 4px; position: relative; background: linear-gradient(#a4b8d4 0, #b4c8e2 5px, #d0ddee 5px); line-height: 28px; }
.sheet { height: 27px; width: 47px; border: solid #8098bf; border-width: 0 1px 1px 0; background: linear-gradient(#a3bad9, #b4c9e3); text-align: center; }
.sheet.on { height: 29px; width: 50px; background: #fff; border-left-width: 1px; line-height: 30px; }

/* status */
.status { height: 27px; flex: none; display: flex; border-top: 1px solid #8098bf; border-bottom: 1px solid #6d86ab; background: linear-gradient(#fff 0, #dbe6f4 2px, #c5d3e5 50%, #aebfd4); font: 12px/26px "DejaVu Sans Condensed", sans-serif; border-right: 1px solid #5f7fae; }
.status > div { border-right: 1px solid #8498b4; box-shadow: 1px 0 #e4ecf6; }
.s1 { width: 529px; padding-left: 2px; }
.s2 { width: 355px; }
.status .s3 { flex: 1; border: 0; box-shadow: none; display: flex; align-items: center; gap: 4px; padding-left: 2px; }
.grip { margin: 10px 1px 0 auto; }
</style>
